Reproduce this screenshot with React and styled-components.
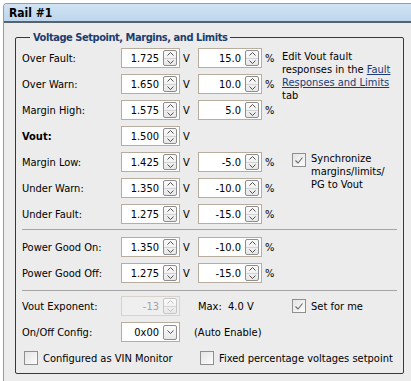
import React from "react";
import styled, { createGlobalStyle } from "styled-components";

const GlobalStyle = createGlobalStyle`
  html, body {
    margin: 0;
    padding: 0;
    background: #fff;
  }
  body {
    font-family: "DejaVu Sans Condensed", "DejaVu Sans", "Liberation Sans", sans-serif;
    font-size: 11px;
    color: #000;
  }
`;

const Panel = styled.div`
  margin: 3px 0 0 3px;
  height: 378px;
  box-sizing: border-box;
  border-top: 1px solid #9c9c9c;
  border-left: 1px solid #9c9c9c;
  border-top-left-radius: 4px;
  background: #ececec;
  overflow: hidden;
`;

const Header = styled.div`
  height: 17px;
  padding-left: 5px;
  display: flex;
  align-items: center;
  background: linear-gradient(#d0e3f3, #bdd6ec);
  border-bottom: 2px solid #56636f;
  font-weight: bold;
  font-size: 12px;
`;

const Body = styled.div`
  padding: 0 7px 0 11px;
`;

const Group = styled.fieldset`
  margin: 8px 0 0 0;
  padding: 1px 6px 2px 6px;
  border: 1px solid #1f3b66;
  border-radius: 2px;
  min-width: 0;
`;

const Legend = styled.legend`
  margin-left: 8px;
  padding: 0 3px;
  font-weight: bold;
  line-height: 13px;
  letter-spacing: -0.45px;
  color: #1d3d6e;
`;

const Grid = styled.div`
  display: grid;
  grid-template-columns: 99px 59px 18px 64px 20px 1fr;
  grid-auto-rows: 26px;
  align-items: center;
`;

const Label = styled.div`
  font-weight: ${(p) => (p.$bold ? "bold" : "normal")};
  white-space: nowrap;
`;

const Unit = styled.div`
  padding-left: 3px;
`;

const Separator = styled.div`
  height: 1px;
  background: #a4a4a4;
  margin: ${(p) => p.$margin};
`;

const Field = styled.div`
  width: ${(p) => p.$w}px;
  height: 20px;
  box-sizing: border-box;
  border: 1px solid ${(p) => (p.$disabled ? "#d8d2cb" : "#b7ad9f")};
  background: ${(p) => (p.$disabled ? "#efefef" : "#fff")};
  display: flex;
  align-items: center;
  padding-right: 2px;
`;

const FieldText = styled.span`
  flex: 1;
  text-align: right;
  padding-right: 4px;
  color: ${(p) => (p.$disabled ? "#a3a3a3" : "#000")};
`;

const SpinBox = styled.div`
  width: 14px;
  height: 16px;
  box-sizing: border-box;
  border: 1px solid ${(p) => (p.$disabled ? "#c6c6c6" : "#8e8e8e")};
  border-radius: 2px;
  background: linear-gradient(#fbfbfb, #e8e8e8);
  display: flex;
  flex-direction: column;
`;

const SpinHalf = styled.div`
  flex: 1;
  display: flex;
  align-items: center;
  justify-content: center;
  & + & {
    border-top: 1px solid ${(p) => (p.$disabled ? "#d4d4d4" : "#b0b0b0")};
  }
`;

const DropButton = styled.div`
  width: 14px;
  height: 15px;
  box-sizing: border-box;
  border: 1px solid #8e8e8e;
  border-radius: 2px;
  background: linear-gradient(#fbfbfb, #e8e8e8);
  display: flex;
  align-items: center;
  justify-content: center;
`;

const SideNote = styled.div`
  grid-column: 6;
  grid-row: ${(p) => p.$rows};
  align-self: start;
  margin-top: ${(p) => p.$top}px;
  padding-left: ${(p) => p.$left}px;
  line-height: 13px;
  white-space: nowrap;
`;

const Link = styled.span`
  color: #1b3a78;
  text-decoration: underline;
`;

const Check = styled.label`
  display: flex;
  align-items: ${(p) => (p.$top ? "flex-start" : "center")};
  gap: 5px;
  grid-column: ${(p) => p.$cols || "auto"};
  padding-left: ${(p) => p.$left || 0}px;
  line-height: 13px;
  white-space: nowrap;
`;

const Box = styled.span`
  flex: none;
  width: 14px;
  height: 14px;
  margin-top: ${(p) => (p.$top ? 1 : 0)}px;
  box-sizing: border-box;
  border: 1px solid #8f8f8f;
  background: linear-gradient(135deg, #e4e4e4, #fcfcfc);
  display: flex;
  align-items: center;
  justify-content: center;
`;

const Extra = styled.div`
  grid-column: ${(p) => p.$cols};
  padding-left: ${(p) => p.$left || 0}px;
  white-space: pre;
`;

const Chevron = ({ down, disabled }) => (
  <svg width="7" height="4" viewBox="0 0 7 4">
    <polyline
      points={down ? "0.5,0.5 3.5,3.5 6.5,0.5" : "0.5,3.5 3.5,0.5 6.5,3.5"}
      fill="none"
      stroke={disabled ? "#c0c0c0" : "#4f4f4f"}
      strokeWidth="1"
    />
  </svg>
);

const Tick = () => (
  <svg width="10" height="9" viewBox="0 0 10 9">
    <polyline points="1.5,4.5 4,7 8.5,1.5" fill="none" stroke="#6a6a6a" strokeWidth="1.1" />
  </svg>
);

const Spin = ({ value, w = 59, disabled }) => (
  <Field $w={w} $disabled={disabled}>
    <FieldText $disabled={disabled}>{value}</FieldText>
    <SpinBox $disabled={disabled}>
      <SpinHalf $disabled={disabled}>
        <Chevron disabled={disabled} />
      </SpinHalf>
      <SpinHalf $disabled={disabled}>
        <Chevron down disabled={disabled} />
      </SpinHalf>
    </SpinBox>
  </Field>
);

const CheckItem = ({ checked, children, ...rest }) => (
  <Check {...rest}>
    <Box $top={rest.$top}>{checked && <Tick />}</Box>
    <span>{children}</span>
  </Check>
);

const limits = [
  { label: "Over Fault:", v: "1.725", p: "15.0" },
  { label: "Over Warn:", v: "1.650", p: "10.0" },
  { label: "Margin High:", v: "1.575", p: "5.0" },
  { label: "Vout:", v: "1.500", bold: true },
  { label: "Margin Low:", v: "1.425", p: "-5.0" },
  { label: "Under Warn:", v: "1.350", p: "-10.0" },
  { label: "Under Fault:", v: "1.275", p: "-15.0" },
];

const powerGood = [
  { label: "Power Good On:", v: "1.350", p: "-10.0" },
  { label: "Power Good Off:", v: "1.275", p: "-15.0" },
];

const LimitRow = ({ row, index }) => (
  <>
    <Label $bold={row.bold} style={{ gridRow: index + 1, gridColumn: 1 }}>
      {row.label}
    </Label>
    <div style={{ gridRow: index + 1, gridColumn: 2 }}>
      <Spin value={row.v} />
    </div>
    <Unit style={{ gridRow: index + 1, gridColumn: 3 }}>V</Unit>
    {row.p && (
      <>
        <div style={{ gridRow: index + 1, gridColumn: 4 }}>
          <Spin value={row.p} w={64} />
        </div>
        <Unit style={{ gridRow: index + 1, gridColumn: 5 }}>%</Unit>
      </>
    )}
  </>
);

export default function App() {
  return (
    <>
      <GlobalStyle />
      <Panel>
        <Header>Rail #1</Header>
        <Body>
          <Group>
            <Legend>Voltage Setpoint, Margins, and Limits</Legend>
            <Grid>
              {limits.map((row, i) => (
                <LimitRow key={row.label} row={row} index={i} />
              ))}
              <SideNote $rows="1 / span 4" $top={5} $left={0}>
                Edit Vout fault
                <br />
                responses in the <Link>Fault</Link>
                <br />
                <Link>Responses and Limits</Link>
                <br />
                tab
              </SideNote>
              <SideNote $rows="5 / span 3" $top={3} $left={10}>
                <CheckItem checked $top>
                  Synchronize
                  <br />
                  margins/limits/
                  <br />
                  PG to Vout
                </CheckItem>
              </SideNote>
            </Grid>
            <Separator $margin="2px 0 4px" />
            <Grid>
              {powerGood.map((row, i) => (
                <LimitRow key={row.label} row={row} index={i} />
              ))}
            </Grid>
            <Separator $margin="4px 0 2px" />
            <Grid>
              <Label>Vout Exponent:</Label>
              <Spin value="-13" disabled />
              <Extra $cols="4 / span 2">{"Max:  4.0 V"}</Extra>
              <CheckItem checked $cols="6" $left={10}>
                Set for me
              </CheckItem>

              <Label>On/Off Config:</Label>
              <Field $w={59}>
                <FieldText>0x00</FieldText>
                <DropButton>
                  <Chevron down />
                </DropButton>
              </Field>
              <Extra $cols="3 / span 3" $left={14}>
                (Auto Enable)
              </Extra>
              <div />

              <CheckItem $cols="1 / span 3" $left={2}>
                Configured as VIN Monitor
              </CheckItem>
              <CheckItem $cols="4 / span 3" $left={2}>
                Fixed percentage voltages setpoint
              </CheckItem>
            </Grid>
          </Group>
        </Body>
      </Panel>
    </>
  );
}
